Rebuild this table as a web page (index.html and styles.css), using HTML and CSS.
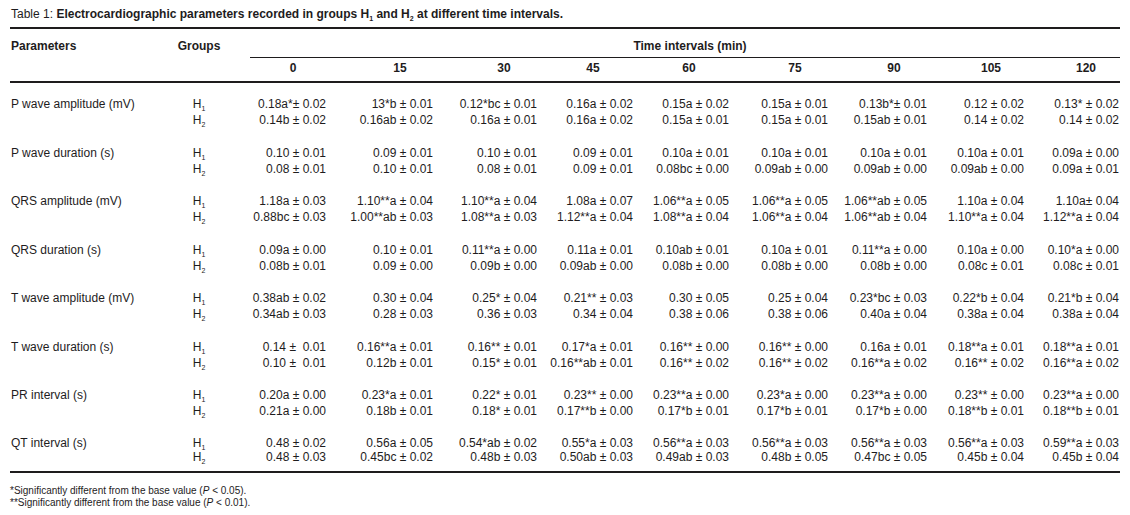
FILE: index.html
```html
<!DOCTYPE html>
<html>
<head>
<meta charset="utf-8">
<link rel="stylesheet" href="styles.css">
</head>
<body>
<div class="page">
  <p class="title">Table 1: <b>Electrocardiographic parameters recorded in groups H<sub>1</sub> and H<sub>2</sub> at different time intervals.</b></p>
  <div class="tbl">
    <div class="thead">
      <div class="th param">Parameters</div>
      <div class="th grp">Groups</div>
      <div class="th time">Time intervals (min)</div>
      <div class="hn blank"></div>
      <div class="hn blank"></div>
      <div class="hn"><span>0</span></div>
      <div class="hn"><span>15</span></div>
      <div class="hn"><span>30</span></div>
      <div class="hn"><span class="wide">45</span></div>
      <div class="hn"><span class="wide">60</span></div>
      <div class="hn"><span>75</span></div>
      <div class="hn"><span>90</span></div>
      <div class="hn"><span>105</span></div>
      <div class="hn last"><span>120</span></div>
    </div>

    <div class="group first">
      <div class="plabel">P wave amplitude (mV)</div>
      <div class="gcell">H<sub>1</sub><br>H<sub>2</sub></div>
      <div class="v">0.18a*± 0.02<br>0.14b ± 0.02</div>
      <div class="v">13*b ± 0.01<br>0.16ab ± 0.02</div>
      <div class="v">0.12*bc ± 0.01<br>0.16a ± 0.01</div>
      <div class="v">0.16a ± 0.02<br>0.16a ± 0.02</div>
      <div class="v">0.15a ± 0.02<br>0.15a ± 0.01</div>
      <div class="v">0.15a ± 0.01<br>0.15a ± 0.01</div>
      <div class="v">0.13b*± 0.01<br>0.15ab ± 0.01</div>
      <div class="v">0.12 ± 0.02<br>0.14 ± 0.02</div>
      <div class="v last">0.13* ± 0.02<br>0.14 ± 0.02</div>
    </div>

    <div class="group">
      <div class="plabel">P wave duration (s)</div>
      <div class="gcell">H<sub>1</sub><br>H<sub>2</sub></div>
      <div class="v">0.10 ± 0.01<br>0.08 ± 0.01</div>
      <div class="v">0.09 ± 0.01<br>0.10 ± 0.01</div>
      <div class="v">0.10 ± 0.01<br>0.08 ± 0.01</div>
      <div class="v">0.09 ± 0.01<br>0.09 ± 0.01</div>
      <div class="v">0.10a ± 0.01<br>0.08bc ± 0.00</div>
      <div class="v">0.10a ± 0.01<br>0.09ab ± 0.00</div>
      <div class="v">0.10a ± 0.01<br>0.09ab ± 0.00</div>
      <div class="v">0.10a ± 0.01<br>0.09ab ± 0.00</div>
      <div class="v last">0.09a ± 0.00<br>0.09a ± 0.01</div>
    </div>

    <div class="group">
      <div class="plabel">QRS amplitude (mV)</div>
      <div class="gcell">H<sub>1</sub><br>H<sub>2</sub></div>
      <div class="v">1.18a ± 0.03<br>0.88bc ± 0.03</div>
      <div class="v">1.10**a ± 0.04<br>1.00**ab ± 0.03</div>
      <div class="v">1.10**a ± 0.04<br>1.08**a ± 0.03</div>
      <div class="v">1.08a ± 0.07<br>1.12**a ± 0.04</div>
      <div class="v">1.06**a ± 0.05<br>1.08**a ± 0.04</div>
      <div class="v">1.06**a ± 0.05<br>1.06**a ± 0.04</div>
      <div class="v">1.06**ab ± 0.05<br>1.06**ab ± 0.04</div>
      <div class="v">1.10a ± 0.04<br>1.10**a ± 0.04</div>
      <div class="v last">1.10a± 0.04<br>1.12**a ± 0.04</div>
    </div>

    <div class="group">
      <div class="plabel">QRS duration (s)</div>
      <div class="gcell">H<sub>1</sub><br>H<sub>2</sub></div>
      <div class="v">0.09a ± 0.00<br>0.08b ± 0.01</div>
      <div class="v">0.10 ± 0.01<br>0.09 ± 0.00</div>
      <div class="v">0.11**a ± 0.00<br>0.09b ± 0.00</div>
      <div class="v">0.11a ± 0.01<br>0.09ab ± 0.00</div>
      <div class="v">0.10ab ± 0.01<br>0.08b ± 0.00</div>
      <div class="v">0.10a ± 0.01<br>0.08b ± 0.00</div>
      <div class="v">0.11**a ± 0.00<br>0.08b ± 0.00</div>
      <div class="v">0.10a ± 0.00<br>0.08c ± 0.01</div>
      <div class="v last">0.10*a ± 0.00<br>0.08c ± 0.01</div>
    </div>

    <div class="group">
      <div class="plabel">T wave amplitude (mV)</div>
      <div class="gcell">H<sub>1</sub><br>H<sub>2</sub></div>
      <div class="v">0.38ab ± 0.02<br>0.34ab ± 0.03</div>
      <div class="v">0.30 ± 0.04<br>0.28 ± 0.03</div>
      <div class="v">0.25* ± 0.04<br>0.36 ± 0.03</div>
      <div class="v">0.21** ± 0.03<br>0.34 ± 0.04</div>
      <div class="v">0.30 ± 0.05<br>0.38 ± 0.06</div>
      <div class="v">0.25 ± 0.04<br>0.38 ± 0.06</div>
      <div class="v">0.23*bc ± 0.03<br>0.40a ± 0.04</div>
      <div class="v">0.22*b ± 0.04<br>0.38a ± 0.04</div>
      <div class="v last">0.21*b ± 0.04<br>0.38a ± 0.04</div>
    </div>

    <div class="group">
      <div class="plabel">T wave duration (s)</div>
      <div class="gcell">H<sub>1</sub><br>H<sub>2</sub></div>
      <div class="v">0.14 ±&nbsp; 0.01<br>0.10 ±&nbsp; 0.01</div>
      <div class="v">0.16**a ± 0.01<br>0.12b ± 0.01</div>
      <div class="v">0.16** ± 0.01<br>0.15* ± 0.01</div>
      <div class="v">0.17*a ± 0.01<br>0.16**ab ± 0.01</div>
      <div class="v">0.16** ± 0.00<br>0.16** ± 0.02</div>
      <div class="v">0.16** ± 0.00<br>0.16** ± 0.02</div>
      <div class="v">0.16a ± 0.01<br>0.16**a ± 0.02</div>
      <div class="v">0.18**a ± 0.01<br>0.16** ± 0.02</div>
      <div class="v last">0.18**a ± 0.01<br>0.16**a ± 0.02</div>
    </div>

    <div class="group">
      <div class="plabel">PR interval (s)</div>
      <div class="gcell">H<sub>1</sub><br>H<sub>2</sub></div>
      <div class="v">0.20a ± 0.00<br>0.21a ± 0.00</div>
      <div class="v">0.23*a ± 0.01<br>0.18b ± 0.01</div>
      <div class="v">0.22* ± 0.01<br>0.18* ± 0.01</div>
      <div class="v">0.23** ± 0.00<br>0.17**b ± 0.00</div>
      <div class="v">0.23**a ± 0.00<br>0.17*b ± 0.01</div>
      <div class="v">0.23*a ± 0.00<br>0.17*b ± 0.01</div>
      <div class="v">0.23**a ± 0.00<br>0.17*b ± 0.00</div>
      <div class="v">0.23** ± 0.00<br>0.18**b ± 0.01</div>
      <div class="v last">0.23**a ± 0.00<br>0.18**b ± 0.01</div>
    </div>

    <div class="group tight">
      <div class="plabel">QT interval (s)</div>
      <div class="gcell">H<sub>1</sub><br>H<sub>2</sub></div>
      <div class="v">0.48 ± 0.02<br>0.48 ± 0.03</div>
      <div class="v">0.56a ± 0.05<br>0.45bc ± 0.02</div>
      <div class="v">0.54*ab ± 0.02<br>0.48b ± 0.03</div>
      <div class="v">0.55*a ± 0.03<br>0.50ab ± 0.03</div>
      <div class="v">0.56**a ± 0.03<br>0.49ab ± 0.03</div>
      <div class="v">0.56**a ± 0.03<br>0.48b ± 0.05</div>
      <div class="v">0.56**a ± 0.03<br>0.47bc ± 0.05</div>
      <div class="v">0.56**a ± 0.03<br>0.45b ± 0.04</div>
      <div class="v last">0.59**a ± 0.03<br>0.45b ± 0.04</div>
    </div>
  </div>
  <div class="notes">
    <p>*Significantly different from the base value (<i>P</i> &lt; 0.05).</p>
    <p>**Significantly different from the base value (<i>P</i> &lt; 0.01).</p>
  </div>
</div>
</body>
</html>
```

FILE: styles.css
```css
* {
  box-sizing: border-box;
}

html, body {
  margin: 0;
  padding: 0;
  background: #ffffff;
}

body {
  font-family: "Liberation Sans", Arial, sans-serif;
  color: #1e1c1d;
  font-size: 12px;
}

.page {
  width: 1130px;
  padding: 7px 10px 0 10px;
}

.title {
  margin: 0 0 6px 1px;
  line-height: 14px;
  font-size: 12px;
  white-space: nowrap;
}

.title b {
  font-weight: bold;
}

sub {
  font-size: 7px;
  line-height: 0;
  vertical-align: -3px;
}

.tbl {
  --cols: 150px 78px 88px 107px 104px 96px 96px 99px 99px 97px 96px;
  width: 1110px;
  border-top: 2px solid #1e1c1d;
  border-bottom: 2px solid #1e1c1d;
}

.thead {
  display: grid;
  grid-template-columns: var(--cols);
  border-bottom: 2px solid #1e1c1d;
  font-weight: bold;
  line-height: 14px;
}

.th {
  padding-top: 10px;
  padding-bottom: 4px;
}

.param {
  padding-left: 1px;
}

.grp {
  text-align: center;
}

.time {
  grid-column: 3 / -1;
  margin-left: 12px;
  padding-left: 10px;
  text-align: center;
  border-bottom: 1px solid #1e1c1d;
}

.hn {
  padding-top: 3px;
  padding-bottom: 6px;
  text-align: right;
}

.hn span {
  display: inline-block;
  width: 66px;
  text-align: center;
}

.hn span.wide {
  width: 80px;
}

.hn.last {
  padding-right: 1px;
}

.group {
  display: grid;
  grid-template-columns: var(--cols);
  line-height: 16px;
  padding-top: 16.5px;
  white-space: nowrap;
}

.group.first {
  padding-top: 13px;
}

.group.tight {
  line-height: 14px;
  padding-bottom: 7px;
}

.plabel {
  padding-left: 1px;
}

.gcell {
  text-align: center;
}

.v {
  text-align: right;
}

.v.last {
  padding-right: 1px;
}

.notes {
  margin-top: 12px;
  font-size: 10px;
  line-height: 12px;
}

.notes p {
  margin: 0;
}
```
